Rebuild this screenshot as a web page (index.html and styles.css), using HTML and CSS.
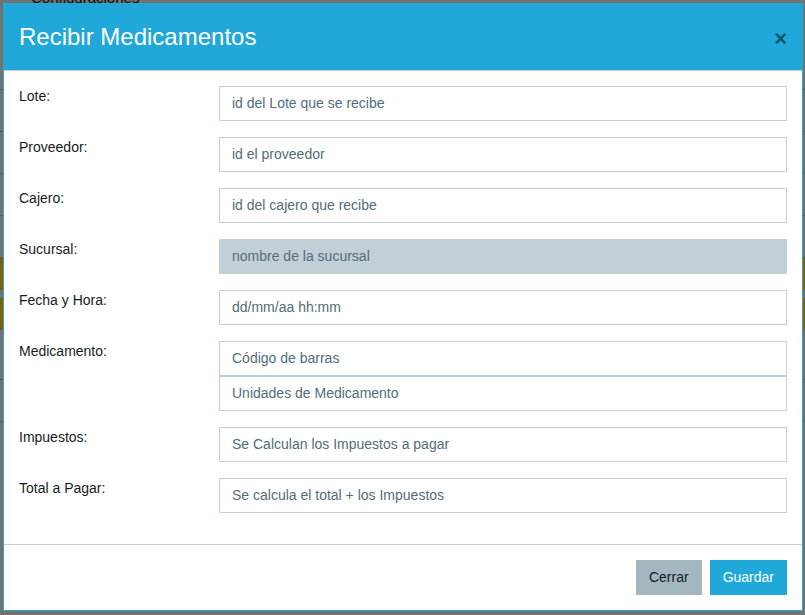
FILE: index.html
```html
<!DOCTYPE html>
<html lang="es">
<head>
<meta charset="utf-8">
<title>Recibir Medicamentos</title>
<link rel="stylesheet" href="styles.css">
</head>
<body>
<div class="page">
  <div class="page-title">Configuraciones</div>
  <div class="page-row"></div>
  <div class="page-row"></div>
  <div class="page-row"></div>
  <div class="page-row"></div>
  <div class="page-row"></div>
  <div class="page-row warn"></div>
  <div class="page-row warn"></div>
  <div class="page-row"></div>
  <div class="page-row"></div>
</div>
<div class="backdrop"></div>
<div class="modal">
  <div class="modal-header">
    <h4 class="modal-title">Recibir Medicamentos</h4>
    <button class="close" type="button" aria-label="Close">×</button>
  </div>
  <div class="modal-body">
    <div class="form-group">
      <label class="form-label">Lote:</label>
      <input class="form-control" type="text" placeholder="id del Lote que se recibe">
    </div>
    <div class="form-group">
      <label class="form-label">Proveedor:</label>
      <input class="form-control" type="text" placeholder="id el proveedor">
    </div>
    <div class="form-group">
      <label class="form-label">Cajero:</label>
      <input class="form-control" type="text" placeholder="id del cajero que recibe">
    </div>
    <div class="form-group">
      <label class="form-label">Sucursal:</label>
      <input class="form-control" type="text" placeholder="nombre de la sucursal" disabled>
    </div>
    <div class="form-group">
      <label class="form-label">Fecha y Hora:</label>
      <input class="form-control" type="text" placeholder="dd/mm/aa hh:mm">
    </div>
    <div class="form-group">
      <label class="form-label">Medicamento:</label>
      <div class="stack">
        <input class="form-control" type="text" placeholder="Código de barras">
        <input class="form-control" type="text" placeholder="Unidades de Medicamento">
      </div>
    </div>
    <div class="form-group">
      <label class="form-label">Impuestos:</label>
      <input class="form-control" type="text" placeholder="Se Calculan los Impuestos a pagar">
    </div>
    <div class="form-group">
      <label class="form-label">Total a Pagar:</label>
      <input class="form-control" type="text" placeholder="Se calcula el total + los Impuestos">
    </div>
  </div>
  <div class="modal-footer">
    <button class="btn btn-secondary" type="button">Cerrar</button>
    <button class="btn btn-primary" type="button">Guardar</button>
  </div>
</div>
</body>
</html>
```

FILE: styles.css
```css
* { box-sizing: border-box; }

html, body {
  margin: 0;
  padding: 0;
  width: 805px;
  height: 615px;
  overflow: hidden;
}

body {
  background: #e4e5e6;
  font-family: "Liberation Sans", Arial, sans-serif;
  font-size: 14px;
  line-height: 1.5;
  color: #151b1e;
}

.page-title {
  padding-left: 31px;
  font-size: 15px;
  line-height: 20px;
  margin-top: -12px;
  color: #151b1e;
  height: 60px;
}

.page-row {
  height: 42px;
  border-bottom: 1px solid #a4b7c1;
}

.page-row.warn {
  height: 32px;
  background: #ffc107;
  border-bottom: 0;
  margin-bottom: 8px;
}

.backdrop {
  position: fixed;
  inset: 0;
  background: rgba(0, 0, 0, 0.5);
}

.modal {
  position: fixed;
  top: 3px;
  left: 3px;
  width: 800px;
  height: 608px;
  background: #fff;
  border: 1px solid #20a8d8;
  display: flex;
  flex-direction: column;
}

.modal-header {
  background: #20a8d8;
  color: #fff;
  padding: 15px;
  border-bottom: 1px solid #c2cfd6;
  display: flex;
  align-items: flex-start;
  justify-content: space-between;
}

.modal-title {
  margin: 0;
  font-size: 24px;
  font-weight: 400;
  line-height: 36px;
}

.close {
  background: transparent;
  border: 0;
  padding: 0;
  margin: 9px 0 0 0;
  font-family: "Liberation Sans", Arial, sans-serif;
  font-size: 22px;
  font-weight: 700;
  line-height: 1;
  color: #000;
  opacity: 0.5;
}

.modal-body {
  padding: 15px;
  flex: 1;
}

.form-group {
  display: grid;
  grid-template-columns: 200px 1fr;
  margin-bottom: 16px;
}

.form-label {
  line-height: 21px;
  color: #151b1e;
}

.stack {
  display: flex;
  flex-direction: column;
}

.form-control {
  display: block;
  width: 100%;
  height: 35px;
  padding: 5px 12px 7px;
  font-family: "Liberation Sans", Arial, sans-serif;
  font-size: 14px;
  line-height: 21px;
  color: #536c79;
  background: #fff;
  border: 1px solid #c2cfd6;
  border-radius: 0;
  margin: 0;
  outline: none;
}

.form-control::placeholder {
  color: #536c79;
  opacity: 1;
}

.form-control:disabled {
  background: #c2cfd6;
  opacity: 1;
}

.modal-footer {
  border-top: 1px solid #c2cfd6;
  padding: 15px;
  display: flex;
  justify-content: flex-end;
  gap: 8px;
}

.btn {
  height: 35px;
  padding: 6px 12px;
  font-family: "Liberation Sans", Arial, sans-serif;
  font-size: 14px;
  line-height: 21px;
  border: 1px solid transparent;
  border-radius: 0;
}

.btn-secondary {
  background: #a4b7c1;
  border-color: #a4b7c1;
  color: #151b1e;
}

.btn-primary {
  background: #20a8d8;
  border-color: #20a8d8;
  color: #fff;
}
```
